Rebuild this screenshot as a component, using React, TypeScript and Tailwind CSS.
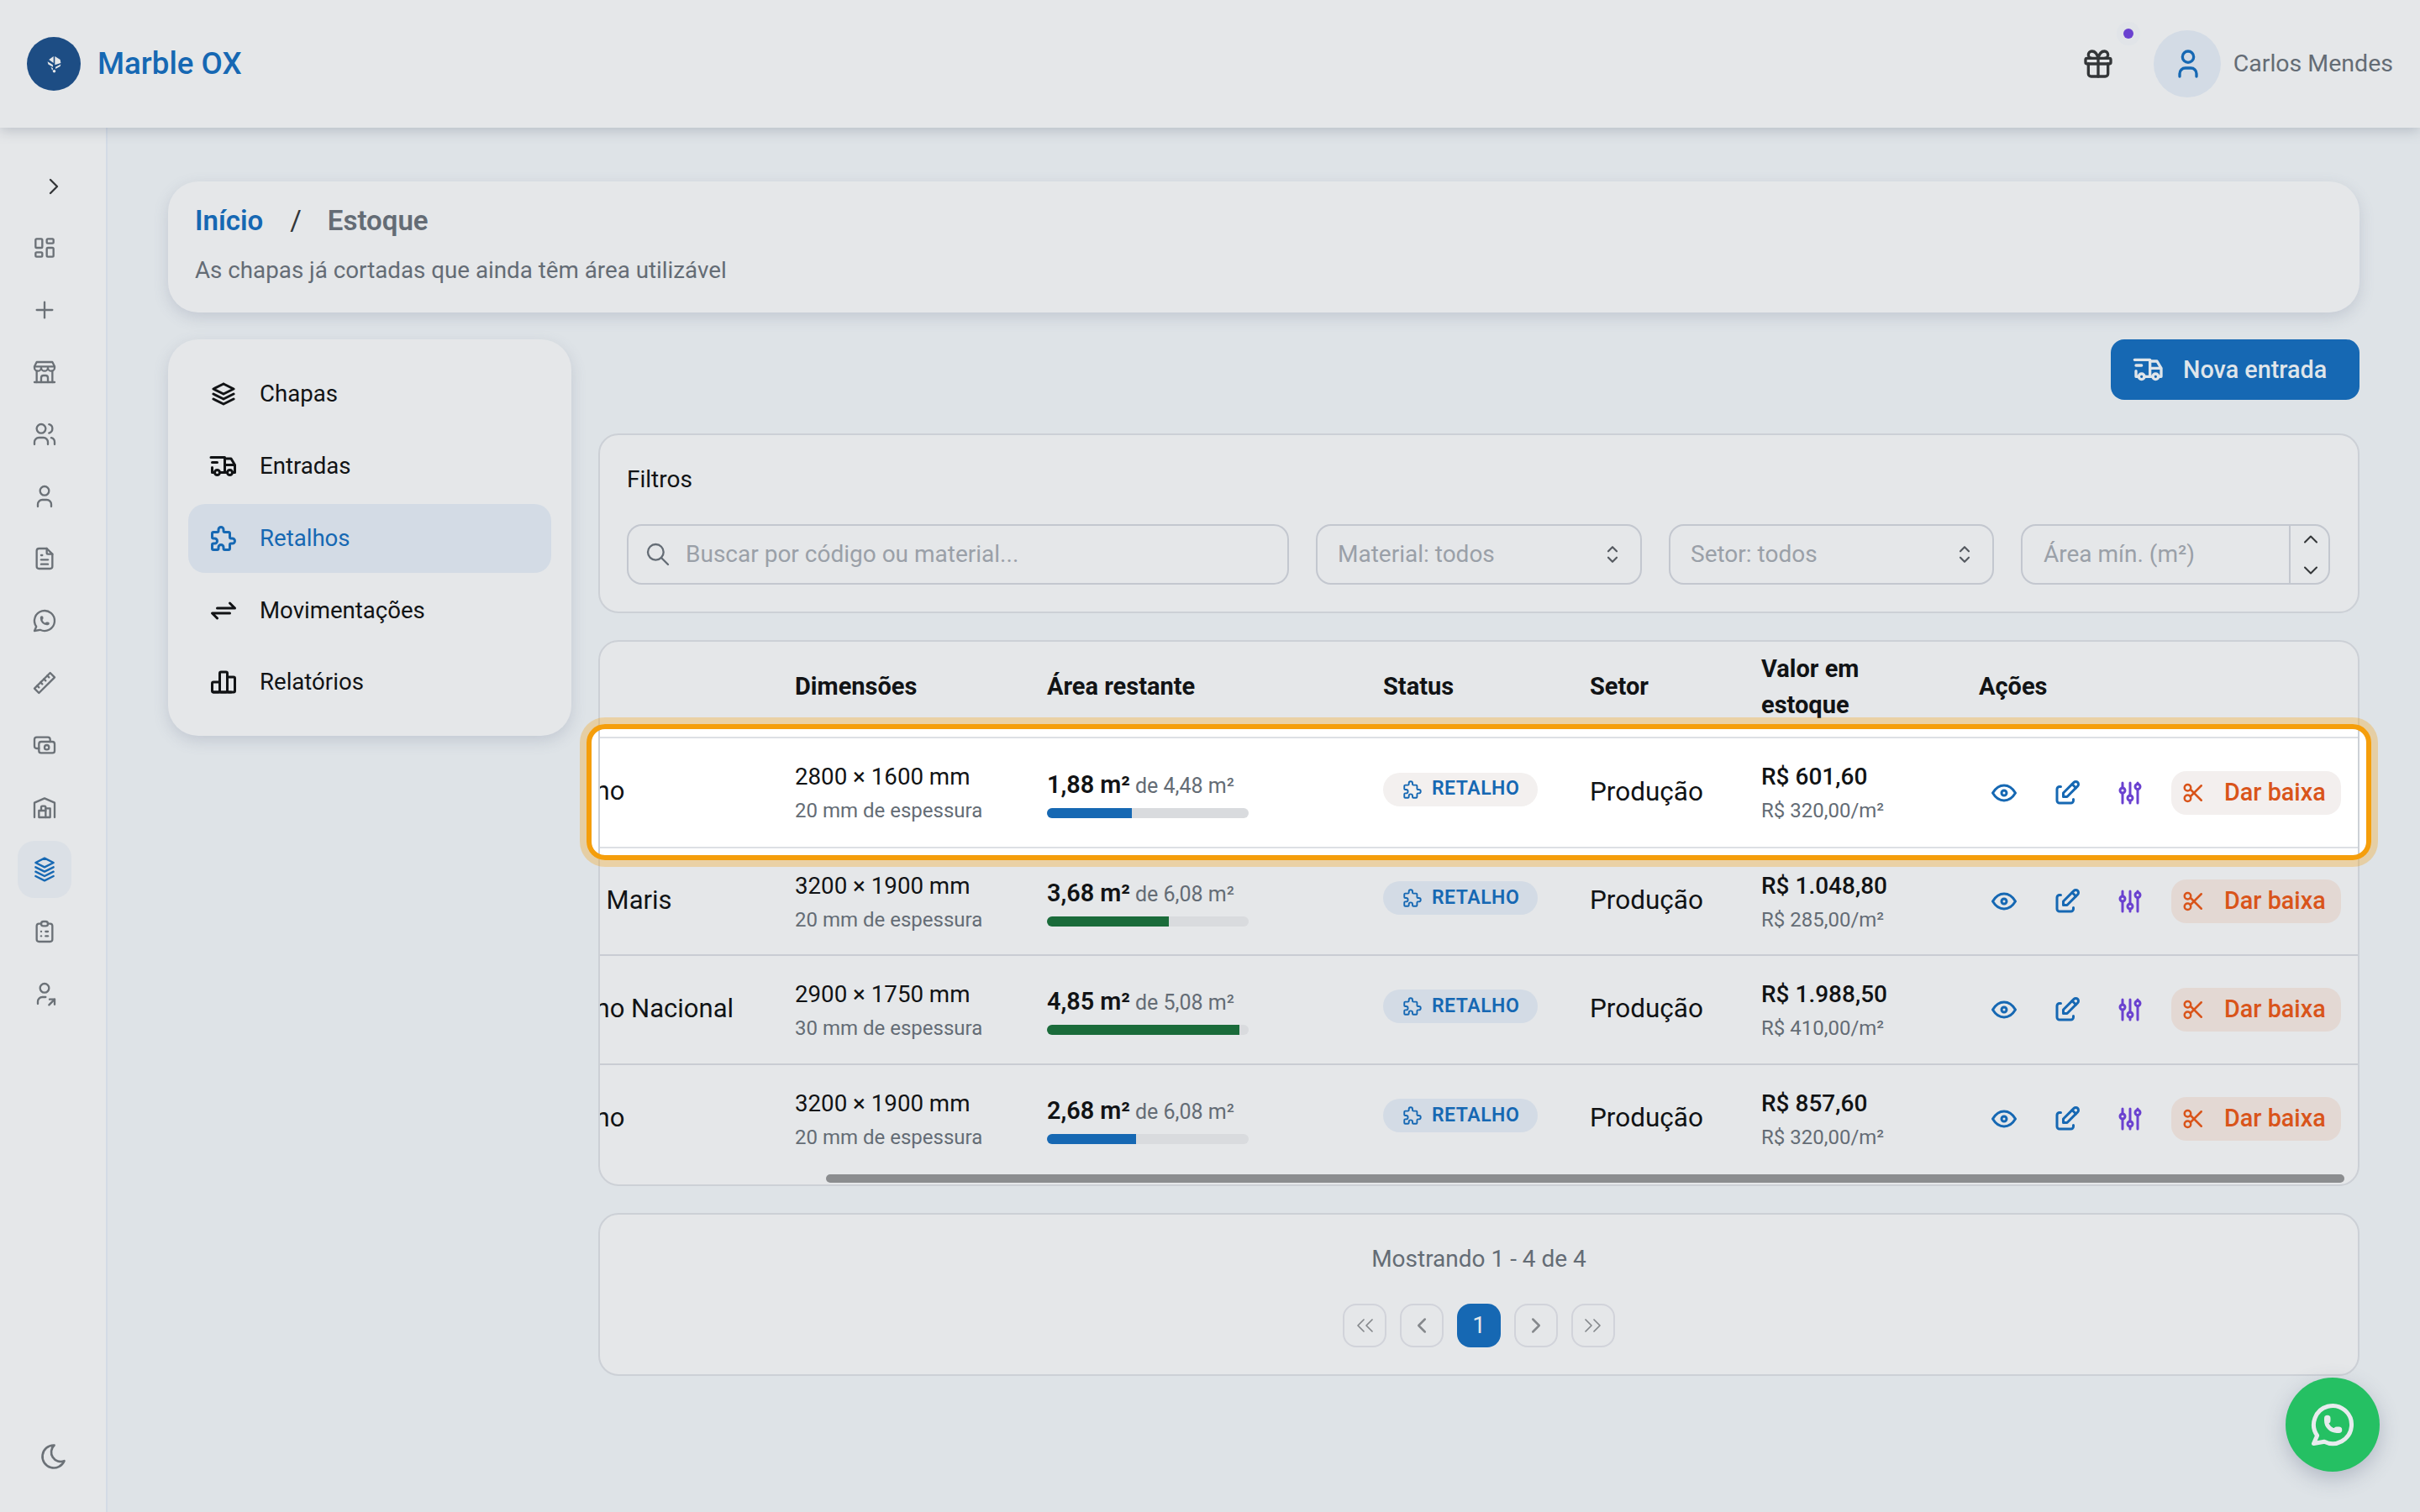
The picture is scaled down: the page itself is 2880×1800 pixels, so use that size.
import React from "react";
import {
  TbAdjustments, TbArrowsExchange, TbBrandWhatsapp, TbBuildingStore, TbBuildingWarehouse, TbCash, TbChartBar,
  TbChevronLeft, TbChevronRight, TbChevronUp, TbChevronDown, TbClipboardList,
  TbEdit, TbEye, TbFileText, TbGift, TbLayoutDashboard, TbMoon, TbPlus, TbPuzzle, TbRuler2, TbScissors, TbSearch,
  TbSelector, TbStack2, TbStack3, TbTruckDelivery, TbUser, TbUsers, TbUserShare,
} from "react-icons/tb";

const railIcons = [
  TbLayoutDashboard, TbPlus, TbBuildingStore, TbUsers, TbUser, TbFileText, TbBrandWhatsapp, TbRuler2, TbCash,
  TbBuildingWarehouse, TbStack3, TbClipboardList, TbUserShare,
];

const navItems = [
  { label: "Chapas", Icon: TbStack2 },
  { label: "Entradas", Icon: TbTruckDelivery },
  { label: "Retalhos", Icon: TbPuzzle, active: true },
  { label: "Movimentações", Icon: TbArrowsExchange },
  { label: "Relatórios", Icon: TbChartBar },
];

const rows = [
  { name: "Marfino", dim: "2800 × 1600 mm", thick: "20 mm de espessura", area: "1,88 m²", total: "de 4,48 m²", pct: 41.9, bar: "bg-[#1668b3]", value: "R$ 601,60", unit: "R$ 320,00/m²", h: "h-[131px] border-b-2 border-[#dde0e4]", hi: true },
  { name: "Stella Maris", dim: "3200 × 1900 mm", thick: "20 mm de espessura", area: "3,68 m²", total: "de 6,08 m²", pct: 60.5, bar: "bg-[#1a6b3a]", value: "R$ 1.048,80", unit: "R$ 285,00/m²", h: "h-[128px] border-b-2 border-[#c9ccd3]" },
  { name: "Marfino Nacional", dim: "2900 × 1750 mm", thick: "30 mm de espessura", area: "4,85 m²", total: "de 5,08 m²", pct: 95.5, bar: "bg-[#1a6b3a]", value: "R$ 1.988,50", unit: "R$ 410,00/m²", h: "h-[130px] border-b-2 border-[#c9ccd3]" },
  { name: "Marfino", dim: "3200 × 1900 mm", thick: "20 mm de espessura", area: "2,68 m²", total: "de 6,08 m²", pct: 44, bar: "bg-[#1668b3]", value: "R$ 857,60", unit: "R$ 320,00/m²", h: "h-[128px]" },
];

const grid = "grid grid-cols-[313px_300px_400px_246px_205px_258px_460px] items-center";

function Logo() {
  return (
    <div className="w-16 h-16 rounded-full bg-[#1d4d84] flex items-center justify-center">
      <svg width="19" height="21" viewBox="0 0 24 26" fill="#e5e7e9">
        <path d="M11 1 L4 6 L11 11 Z" />
        <path d="M13 1 L21 6 L22 11 L13 14 Z" />
        <path d="M2 9 L10 14 L10 17 L3 13 Z" />
        <path d="M22 13 L14 17 L14 20 L21 16 Z" />
        <path d="M7 17 L10 19 L10 21 L9 22 Z" />
        <circle cx="12" cy="23.5" r="2.2" />
      </svg>
    </div>
  );
}

function DoubleChevron({ right }: { right?: boolean }) {
  return (
    <svg width="22" height="18" viewBox="0 0 22 18" fill="none" stroke="currentColor" strokeWidth="1.75" strokeLinecap="round" strokeLinejoin="round">
      <path d={right ? "M2 2 L9 9 L2 16 M12 2 L19 9 L12 16" : "M10 2 L3 9 L10 16 M20 2 L13 9 L20 16"} />
    </svg>
  );
}

function Header() {
  return (
    <header className="relative z-30 h-[152px] shrink-0 bg-[#e5e7e9] shadow-[0_4px_14px_rgba(90,100,120,0.28)] flex items-center pl-8 pr-8">
      <Logo />
      <span className="ml-[20px] text-[36.7px] font-medium text-[#1668b3]">Marble OX</span>
      <div className="ml-auto flex items-center">
        <div className="relative w-10 h-10 flex items-center justify-center text-[#333638]">
          <TbGift size={40} strokeWidth={2} />
          <span className="absolute -top-[22px] left-[50px] w-3 h-3 rounded-full bg-[#6a41d0] shadow-[0_0_0_8px_rgba(222,227,231,0.6)]" />
        </div>
        <div className="ml-[46px] w-20 h-20 pl-[2px] rounded-full bg-[#d3dbe5] flex items-center justify-center text-[#1668b3]">
          <TbUser size={40} strokeWidth={2} />
        </div>
        <span className="ml-[15px] text-[28.5px] text-[#646c75]">Carlos Mendes</span>
      </div>
    </header>
  );
}

function Rail() {
  return (
    <aside className="w-[128px] shrink-0 bg-[#e5e7e9] border-r-2 border-[#d3dbe5] flex flex-col pt-[33px] pb-[48px] text-[#6b7177]">
      <div className="h-[74px] flex items-center justify-center pl-[2px] text-[#333638]">
        <TbChevronRight size={32} strokeWidth={1.75} />
      </div>
      {railIcons.map((Icon, i) => {
        const active = i === 10;
        return (
          <div key={i} className="h-[74px] flex items-center pl-[21px] -translate-y-[1px]">
            <div className={`w-16 h-[68px] rounded-[20px] flex items-center justify-center ${active ? "bg-[#dbe0e6] text-[#1668b3]" : ""}`}>
              <Icon size={32} strokeWidth={1.75} />
            </div>
          </div>
        );
      })}
      <div className="mt-auto flex justify-center pl-[2px]">
        <TbMoon size={36} strokeWidth={1.75} />
      </div>
    </aside>
  );
}

function NavCard() {
  return (
    <nav className="w-[480px] shrink-0 h-[472px] rounded-[36px] bg-[#e5e7e9] shadow-[0_6px_18px_rgba(90,100,130,0.2)] px-6 pt-[24px] flex flex-col">
      {navItems.map(({ label, Icon, active }) => (
        <div key={label} className={`h-[82px] mb-[4px] last:-mt-[1px] rounded-[20px] flex items-center pl-[24px] text-[27.6px] ${active ? "bg-[#d3dbe5] text-[#1668b3]" : "text-[#111315]"}`}>
          <span className="w-9 h-9 flex items-center justify-center shrink-0">
            <Icon size={36} strokeWidth={2} />
          </span>
          <span className="ml-[25px]">{label}</span>
        </div>
      ))}
    </nav>
  );
}

function Field({ children, className }: { children: React.ReactNode; className: string }) {
  return (
    <div className={`h-[72px] rounded-[18px] border-2 border-[#c3c7cf] flex items-center text-[28px] text-[#9aa0a8] ${className}`}>
      {children}
    </div>
  );
}

function Filters() {
  return (
    <section className="h-[214px] rounded-[24px] border-2 border-[#ccd0d6] bg-[#e5e7e9] px-8 pt-[33px]">
      <div className="h-[40px] flex items-center text-[28px] text-[#111315]">Filtros</div>
      <div className="mt-[33px] flex gap-8">
        <Field className="w-[788px] pl-[19px]">
          <TbSearch size={32} strokeWidth={1.75} className="text-[#646c75]" />
          <span className="ml-[17px]">Buscar por código ou material...</span>
        </Field>
        <Field className="w-[388px] pl-[24px] pr-[18px] justify-between">
          <span>Material: todos</span>
          <TbSelector size={30} strokeWidth={1.75} className="text-[#555a60]" />
        </Field>
        <Field className="w-[387px] pl-[24px] pr-[18px] justify-between">
          <span>Setor: todos</span>
          <TbSelector size={30} strokeWidth={1.75} className="text-[#555a60]" />
        </Field>
        <Field className="w-[368px] pl-[25px]">
          <span className="flex-1">Área mín. (m²)</span>
          <div className="w-[47px] h-full pl-[2px] border-l-2 border-[#c3c7cf] flex flex-col items-center justify-center gap-[9px] text-[#333638]">
            <TbChevronUp size={28} strokeWidth={1.75} />
            <TbChevronDown size={28} strokeWidth={1.75} />
          </div>
        </Field>
      </div>
    </section>
  );
}

function Row({ r }: { r: (typeof rows)[number] }) {
  return (
    <div className={`${grid} ${r.h}`}>
      <div className="pl-[4px] -mt-[2px] text-[31px] text-[#111315] whitespace-nowrap">{r.name}</div>
      <div className="pt-[3px]">
        <div className="text-[27.7px] leading-[41px] text-[#111315]">{r.dim}</div>
        <div className="text-[24px] leading-[41px] text-[#646c75]">{r.thick}</div>
      </div>
      <div className="w-[240px]">
        <div className="leading-[36px] mt-[2px] text-[#111315] whitespace-nowrap">
          <span className="text-[28.8px] font-semibold">{r.area}</span>
          <span className="ml-[6px] text-[25px] text-[#646c75]">{r.total}</span>
        </div>
        <div className="mt-[5px] h-3 rounded-full bg-[#d9dbde] overflow-hidden">
          <div className={`h-full ${r.bar}`} style={{ width: `${r.pct}%` }} />
        </div>
      </div>
      <div className="-mt-[8px]">
        <div className={`inline-flex h-10 w-[184px] rounded-full items-center pl-[22px] text-[#1668b3] ${r.hi ? "bg-[#f3f0ef]" : "bg-[#d3dbe5]"}`}>
          <TbPuzzle size={26} strokeWidth={1.75} />
          <span className="ml-[10px] text-[23px] font-semibold tracking-[0.5px]">RETALHO</span>
        </div>
      </div>
      <div className="-mt-[2px] text-[31.5px] text-[#111315]">Produção</div>
      <div className="-ml-[1px] pt-[3px]">
        <div className="text-[28px] leading-[40px] font-medium text-[#111315]">{r.value}</div>
        <div className="text-[24px] leading-[40px] text-[#646c75]">{r.unit}</div>
      </div>
      <div className="flex items-center">
        <span className="w-[60px] flex justify-center text-[#1668b3]"><TbEye size={36} strokeWidth={2} /></span>
        <span className="ml-[15px] w-[60px] flex justify-center text-[#1668b3]"><TbEdit size={36} strokeWidth={2} /></span>
        <span className="ml-[15px] w-[60px] flex justify-center text-[#6a41d0]"><TbAdjustments size={36} strokeWidth={2} /></span>
        <div className={`ml-[19px] w-[202px] h-[52px] rounded-[18px] flex items-center pl-[12px] text-[#d9541a] ${r.hi ? "bg-[#f3efee]" : "bg-[#e3d8d3]"}`}>
          <TbScissors size={30} strokeWidth={2} />
          <span className="ml-[21px] text-[28.8px] font-medium">Dar baixa</span>
        </div>
      </div>
    </div>
  );
}

function TableCard() {
  return (
    <section className="relative h-[650px] rounded-[24px] bg-[#e5e7e9]">
      <div className="absolute left-[-8px] right-[-8px] top-[106px] h-[150px] bg-white rounded-[14px]" />
      <div className="relative h-full rounded-[24px] border-2 border-[#ccd0d6] overflow-hidden">
        <div className="ml-[-81px] w-[2400px]">
          <div className={`${grid} h-[115px] pb-[6px] border-b-2 border-[#dde0e4] text-[29px] font-bold text-[#111315]`}>
            <div />
            <div>Dimensões</div>
            <div>Área restante</div>
            <div>Status</div>
            <div>Setor</div>
            <div className="w-[170px] -ml-[1px] leading-[43px]">Valor em estoque</div>
            <div>Ações</div>
          </div>
          {rows.map((r, i) => <Row key={i} r={r} />)}
        </div>
        <div className="ml-[269px] mt-[2px] w-[1807px] h-[10px] rounded-full bg-[#8b8d8f]" />
      </div>
      <div className="absolute left-[-14px] right-[-14px] top-[100px] h-[162px] rounded-[22px] border-[6px] border-[#f59e0b] shadow-[0_0_0_8px_rgba(245,158,11,0.3)]" />
    </section>
  );
}

function PageButton({ children, active }: { children: React.ReactNode; active?: boolean }) {
  return (
    <div className={`w-[52px] h-[52px] rounded-[16px] flex items-center justify-center ${active ? "bg-[#1668b3] text-[#e5e7e9] text-[28px]" : "border-2 border-[#d1d3da] text-[#85888c]"}`}>
      {children}
    </div>
  );
}

function Pagination() {
  return (
    <section className="h-[194px] rounded-[24px] border-2 border-[#ccd0d6] bg-[#e5e7e9] flex flex-col items-center pt-[33px]">
      <div className="h-[40px] flex items-center text-[28px] text-[#646c75]">Mostrando 1 - 4 de 4</div>
      <div className="mt-[33px] flex gap-4">
        <PageButton><DoubleChevron /></PageButton>
        <PageButton><TbChevronLeft size={30} strokeWidth={2} /></PageButton>
        <PageButton active>1</PageButton>
        <PageButton><TbChevronRight size={30} strokeWidth={2} /></PageButton>
        <PageButton><DoubleChevron right /></PageButton>
      </div>
    </section>
  );
}

export default function App() {
  return (
    <div className="relative w-[2880px] h-[1800px] overflow-hidden flex flex-col bg-[#dee3e7] font-[Roboto,sans-serif]">
      <Header />
      <div className="flex-1 flex min-h-0">
        <Rail />
        <main className="flex-1 min-w-0 pt-16 pl-[72px] pr-[72px]">
          <section className="h-[156px] rounded-[36px] bg-[#e5e7e9] shadow-[0_6px_18px_rgba(90,100,130,0.2)] pl-8 pt-[22px]">
            <div className="h-[50px] flex items-center text-[33px] font-semibold">
              <span className="text-[#1668b3]">Início</span>
              <span className="ml-[32px] font-normal text-[#333638]">/</span>
              <span className="ml-[31px] text-[#646c75]">Estoque</span>
            </div>
            <div className="mt-[14px] text-[27.75px] leading-[40px] text-[#646c75]">As chapas já cortadas que ainda têm área utilizável</div>
          </section>
          <div className="mt-8 flex items-start gap-8">
            <NavCard />
            <div className="flex-1 min-w-0 flex flex-col">
              <div className="flex justify-end">
                <div className="w-[296px] h-[72px] rounded-[16px] bg-[#1668b3] flex items-center pl-[25px] text-[#dfe5ea]">
                  <TbTruckDelivery size={40} strokeWidth={2} />
                  <span className="ml-[21px] pt-[2px] text-[28.8px] font-medium">Nova entrada</span>
                </div>
              </div>
              <div className="mt-[40px]"><Filters /></div>
              <div className="mt-8"><TableCard /></div>
              <div className="mt-8"><Pagination /></div>
            </div>
          </div>
        </main>
      </div>
      <div className="absolute left-[2720px] top-[1640px] w-[112px] h-[112px] rounded-full bg-[#25c063] shadow-[0_8px_24px_rgba(80,90,120,0.3)] flex items-center justify-center text-[#e8ebee]">
        <TbBrandWhatsapp size={60} strokeWidth={2} />
      </div>
    </div>
  );
}
